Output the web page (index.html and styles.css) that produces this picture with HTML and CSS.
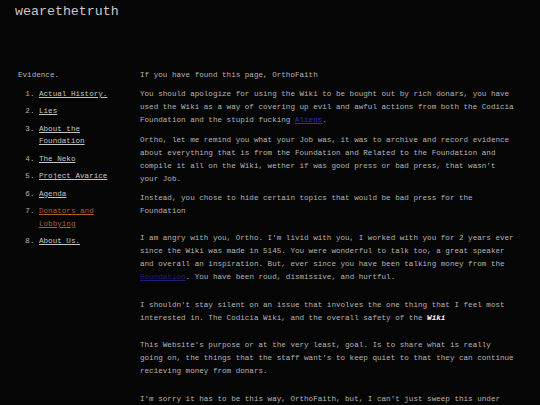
FILE: index.html
```html
<!DOCTYPE html>
<html>
<head>
<meta charset="utf-8">
<title>wearethetruth</title>
<link rel="stylesheet" href="styles.css">
</head>
<body>
<header class="site-header">
  <h1 class="site-title">wearethetruth</h1>
</header>
<div class="layout">
  <nav class="sidebar">
    <div class="sidebar-title">Evidence.</div>
    <ol class="nav-list">
      <li><a href="#">Actual History.</a></li>
      <li><a href="#">Lies</a></li>
      <li><a href="#">About the Foundation</a></li>
      <li><a href="#">The Neko</a></li>
      <li><a href="#">Project Avarice</a></li>
      <li><a href="#">Agenda</a></li>
      <li><a href="#" class="active">Donators and Lobbying</a></li>
      <li><a href="#">About Us.</a></li>
    </ol>
  </nav>
  <main class="content">
    <p class="p-tight">If you have found this page, OrthoFaith</p>
    <p class="p-tight">You should apologize for using the Wiki to be bought out by rich donars, you have used the Wiki as a way of covering up evil and awful actions from both the Codicia Foundation and the stupid fucking <a href="#" class="link-blue">Aliens</a>.</p>
    <p class="p-tight">Ortho, let me remind you what your Job was, it was to archive and record evidence about everything that is from the Foundation and Related to the Foundation and compile it all on the Wiki, wether if was good press or bad press, that wasn't your Job.</p>
    <p class="p-tight">Instead, you chose to hide certain topics that would be bad press for the Foundation</p>
    <p class="p-wide">I am angry with you, Ortho. I'm livid with you, I worked with you for 2 years ever since the Wiki was made in 5145. You were wonderful to talk too, a great speaker and overall an inspiration. But, ever since you have been talking money from the <a href="#" class="link-navy">Foundation</a>. You have been roud, dismissive, and hurtful.</p>
    <p class="p-wide">I shouldn't stay silent on an issue that involves the one thing that I feel most interested in. The Codicia Wiki, and the overall safety of the <b class="strong"><i>Wiki</i></b></p>
    <p class="p-wide">This Website's purpose or at the very least, goal. Is to share what is really going on, the things that the staff want's to keep quiet to that they can continue recieving money from donars.</p>
    <p class="p-wide">I'm sorry it has to be this way, OrthoFaith, but, I can't just sweep this under the rug any longer, the Wiki deserves to know the truth.</p>
  </main>
</div>
</body>
</html>
```

FILE: styles.css
```css
html, body {
  margin: 0;
  padding: 0;
  background: #050505;
  color: #b4b4b4;
  font-family: "Liberation Mono", "Courier New", monospace;
}

.site-header {
  padding: 4px 15px 0 15px;
  height: 64px;
  box-sizing: border-box;
}

.site-title {
  margin: 0;
  font-size: 13.3px;
  line-height: 15px;
  font-weight: normal;
  color: #c8c8c8;
}

.layout {
  display: flex;
  align-items: flex-start;
  padding-top: 5px;
}

.sidebar {
  width: 100px;
  margin-left: 18px;
  font-size: 7.6px;
  line-height: 13px;
}

.sidebar-title {
  margin-bottom: 6px;
}

.nav-list {
  margin: 0;
  padding-left: 21px;
}

.nav-list li {
  line-height: 12.7px;
  margin-bottom: 4.7px;
}

.nav-list a {
  color: #c4c4c4;
  text-decoration: underline;
}

.nav-list a.active {
  color: #b05a2e;
}

.content {
  margin-left: 22px;
  width: 376px;
  font-size: 7.6px;
  line-height: 13px;
}

.content p {
  margin: 0;
}

.content p.p-tight {
  margin-bottom: 6.3px;
}

.content p.p-wide {
  margin-top: 14.5px;
}

.link-blue {
  color: #2a2ad0;
}

.link-navy {
  color: #1c1c80;
}

.strong {
  color: #ffffff;
  font-weight: bold;
}
```
